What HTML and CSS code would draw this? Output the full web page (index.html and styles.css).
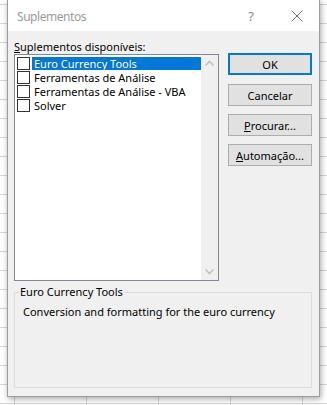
FILE: index.html
```html
<!DOCTYPE html>
<html lang="pt">
<head>
<meta charset="utf-8">
<title>Suplementos</title>
<link rel="stylesheet" href="styles.css">
</head>
<body>
<div class="dialog">
  <div class="titlebar">
    <span class="title">Suplementos</span>
    <span class="help">?</span>
    <svg class="close" width="12" height="12" viewBox="0 0 12 12"><path d="M0.5 0.5 L11.5 11.5 M11.5 0.5 L0.5 11.5" stroke="#707070" stroke-width="1" fill="none"/></svg>
  </div>
  <div class="body">
    <div class="top">
      <div class="left">
        <div class="label"><u>S</u>uplementos disponíveis:</div>
        <div class="listbox">
          <ul class="items">
            <li class="item"><span class="check"></span><span class="name selected">Euro Currency Tools</span></li>
            <li class="item"><span class="check"></span><span class="name">Ferramentas de Análise</span></li>
            <li class="item"><span class="check"></span><span class="name">Ferramentas de Análise - VBA</span></li>
            <li class="item"><span class="check"></span><span class="name">Solver</span></li>
          </ul>
          <div class="scrollbar">
            <svg class="arrow" width="17" height="17" viewBox="0 0 17 17"><path d="M4.5 10.5 L8.5 6.5 L12.5 10.5" stroke="#c2c2c2" stroke-width="1.6" fill="none"/></svg>
            <svg class="arrow" width="17" height="17" viewBox="0 0 17 17"><path d="M4.5 6.5 L8.5 10.5 L12.5 6.5" stroke="#c2c2c2" stroke-width="1.6" fill="none"/></svg>
          </div>
        </div>
      </div>
      <div class="buttons">
        <button class="btn default">OK</button>
        <button class="btn">Cancelar</button>
        <button class="btn"><u>P</u>rocurar...</button>
        <button class="btn"><u>A</u>utomação...</button>
      </div>
    </div>
    <fieldset class="group">
      <legend class="legend">Euro Currency Tools</legend>
      <p class="desc">Conversion and formatting for the euro currency</p>
    </fieldset>
  </div>
</div>
</body>
</html>
```
FILE: styles.css
```css
html, body {
  margin: 0;
  padding: 0;
}
body {
  width: 327px;
  height: 405px;
  overflow: hidden;
  background-color: #ffffff;
  background-image:
    linear-gradient(to right, #d4d4d4 1px, transparent 1px),
    linear-gradient(to bottom, #d4d4d4 1px, transparent 1px);
  background-size: 72px 19px;
  background-position: 14px 4px;
  font-family: "Noto Sans", "DejaVu Sans", sans-serif;
  font-size: 11px;
  color: #000;
}
.dialog {
  box-sizing: border-box;
  margin: -1px 0 0 7px;
  width: 313px;
  height: 398px;
  border: 1px solid #9c9c9c;
  background: #f0f0f0;
  box-shadow: 1px 2px 6px rgba(0,0,0,0.35);
  display: flex;
  flex-direction: column;
}
.titlebar {
  height: 31px;
  background: #ffffff;
  display: flex;
  align-items: center;
  padding-left: 9px;
}
.title {
  font-size: 12px;
  letter-spacing: -0.45px;
  color: #9a9a9a;
  flex: 1;
  padding-top: 1px;
}
.help {
  font-size: 13px;
  color: #8a8a8a;
  margin-right: 37px;
}
.close {
  margin-right: 16px;
}
.body {
  flex: 1;
  padding: 0 7px 8px 6px;
  display: flex;
  flex-direction: column;
}
.top {
  display: flex;
  gap: 9px;
}
.left {
  width: 205px;
}
.label {
  margin-top: 9px;
  line-height: 14px;
  height: 14px;
}
.listbox {
  box-sizing: border-box;
  width: 205px;
  height: 227px;
  border: 1px solid #828790;
  background: #fff;
  display: flex;
}
.items {
  list-style: none;
  margin: 0;
  padding: 1px 0 0 2px;
  width: 184px;
}
.item {
  display: flex;
  align-items: center;
  height: 14px;
}
.check {
  box-sizing: border-box;
  width: 13px;
  height: 13px;
  border: 1px solid #333;
  background: #fff;
  flex: none;
}
.name {
  margin-left: 2px;
  padding-left: 2px;
  line-height: 13px;
  height: 13px;
  flex: 1;
  white-space: nowrap;
}
.selected {
  background: #0078d7;
  color: #fff;
}
.scrollbar {
  width: 17px;
  background: #f0f0f0;
  display: flex;
  flex-direction: column;
  justify-content: space-between;
}
.arrow {
  display: block;
}
.buttons {
  padding-top: 22px;
  display: flex;
  flex-direction: column;
  gap: 8px;
}
.btn {
  box-sizing: border-box;
  width: 84px;
  height: 22px;
  border: 1px solid #adadad;
  background: #e1e1e1;
  font-family: inherit;
  font-size: 11px;
  color: #000;
  padding: 0;
}
.btn.default {
  border: 2px solid #0078d7;
  margin-bottom: 1px;
}
.group {
  box-sizing: border-box;
  margin: 4px 0 0 0;
  height: 103px;
  border: 1px solid #dcdcdc;
  padding: 0 0 0 4px;
  min-width: 0;
}
.legend {
  padding: 0 1px;
  line-height: 14px;
}
.desc {
  margin: 6px 0 0 4px;
  line-height: 14px;
}
```
